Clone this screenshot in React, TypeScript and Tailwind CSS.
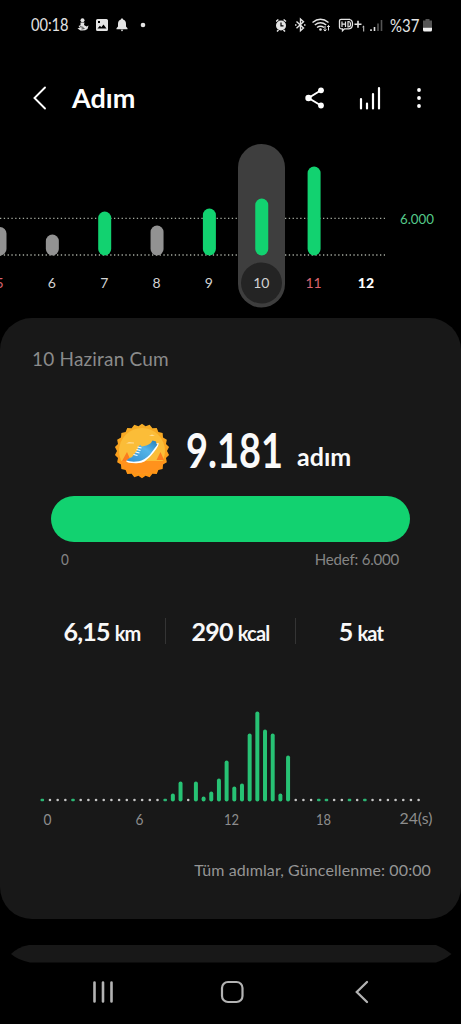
import React from "react";

interface Day {
  label: string;
  top: number;
  met?: boolean;
}

const days: Day[] = [
  { label: "5", top: 92 },
  { label: "6", top: 99.5 },
  { label: "7", top: 76.5, met: true },
  { label: "8", top: 90.5 },
  { label: "9", top: 73.5, met: true },
  { label: "10", top: 63.5, met: true },
  { label: "11", top: 31.5, met: true },
  { label: "12", top: 0 },
];

// bar heights per half hour, 1 = only a green dot on the axis
const slots: Record<number, number> = {
  0: 1, 4: 1, 16: 1, 17: 8, 18: 20, 20: 20, 21: 5, 22: 10, 23: 23, 24: 41,
  25: 15, 26: 18, 27: 68, 28: 90, 29: 72, 30: 68, 31: 8, 32: 46,
  36: 1, 37: 1, 40: 1, 42: 1,
};

const dayColor = (label: string): string => {
  if (label === "5" || label === "11") return "#d8636f";
  if (label === "12") return "#ffffff";
  return "#d2d2d2";
};

const StatusBar = () => (
  <div className="flex h-[50px] items-center justify-between pl-[31px] pr-[29px] text-[17px] text-[#e4e4e4]">
    <div className="flex items-center">
      <span className="w-[46px] origin-left scale-x-[.86] whitespace-nowrap">00:18</span>
      <svg width="70" height="14" viewBox="0 0 70 14" fill="#e4e4e4">
        <circle cx="5.5" cy="2.3" r="2" />
        <path d="M3.5 4.5h4l-.5 2.5 2.5 1.5 2-1-1 3.5Q8 13 3.5 12.5L.5 10.5 3 9.5 1.5 8l2-.8z" />
        <path d="M3 8.700l3.500.7M4.500 11l3-.5" stroke="#000" strokeWidth=".7" />
        <path
          fillRule="evenodd"
          d="M20.500 1h9q1.500 0 1.500 1.500v9q0 1.500-1.500 1.500h-9q-1.500 0-1.500-1.500v-9q0-1.500 1.500-1.500zM20.500 10.500h9l-3-4-2.200 2.800-1.400-1.500zM21 3v2h2v-2z"
        />
        <path d="M45 .5c-1 0-1.300.6-1.300 1.300-2 .6-2.700 2-2.700 4.200v2.500l-1.500 1.800v.9h11v-.9L49 8.500V6c0-2.200-.7-3.600-2.700-4.200C46.300 1.100 46 .5 45 .5zM43.700 11.800h2.600l-1.300 1.700z" />
        <circle cx="66" cy="7" r="2.300" />
      </svg>
    </div>
    <div className="flex items-center">
      <svg className="mr-px" width="113" height="16" viewBox="1 0 113 16" fill="none" stroke="#e4e4e4">
        {/* alarm */}
        <circle cx="6" cy="8.500" r="5" fill="#e4e4e4" stroke="none" />
        <path d="M1 4.500l2.400-2M11 4.500l-2.400-2M2 14.500L3.500 13M10 14.500L8.500 13" strokeWidth="1.500" />
        <path d="M6 5.500v3.300h2.500" stroke="#000" strokeWidth="1.200" />
        {/* bluetooth */}
        <path d="M21.500 4.500l7 6.500-3 2.700V2l3 2.700-7 6.500" strokeWidth="1.400" />
        <path d="M20 8h1.500M29 8h1.500" strokeWidth="1.500" />
        {/* wifi */}
        <path d="M37.500 5.500q8-6.500 16 0M39.800 8q5.700-4.500 11.400 0M42 10.500q3.500-2.600 7 0" strokeWidth="1.500" />
        <circle cx="45.500" cy="12.500" r="1.300" fill="#e4e4e4" stroke="none" />
        <path d="M50 9v5M48.500 12.500l1.500 1.600 1.500-1.600M53.500 13.500V8.500M52.200 10l1.300-1.500L54.800 10" />
        {/* hd voice */}
        <path d="M75 2.300H66q-1.500 0-1.500 1.500v6.500q0 1.500 1.500 1.500h1.500v2l2-2H74q3.500 0 3.500-4.700T74 2.300" strokeWidth="1.300" />
        <path d="M67 4.500v5.500M70.500 4.500v5.500M67 7.200h3.500M73 4.500v5.500h.5q2 0 2-2.700t-2-2.800z" strokeWidth="1.200" />
        <path d="M79.500 7.200h7M83 3.700v7" strokeWidth="1.600" />
        <path d="M87.500 10l1.200-1v5.500" strokeWidth=".9" />
        <path d="M96 14v-1.800M99.500 14v-4" strokeWidth="1.600" />
        <path d="M103 14V6.500M106.500 14V3" stroke="#555" strokeWidth="1.600" />
      </svg>
      <span className="w-[33px] origin-left scale-x-[.83] whitespace-nowrap text-[18px]">%37</span>
      <svg width="9" height="14" viewBox="0 0 9 14">
        <path d="M2.500 1h4v1.500H9V9H0V2.500h2.500z" fill="#555" />
        <path d="M0 9.500h9v2.500q0 1.500-1.500 1.500h-6Q0 13.500 0 12z" fill="#f0f0f0" />
      </svg>
    </div>
  </div>
);

const Header = () => (
  <div className="flex h-[85px] items-center pl-[33px] pr-[40px] pt-[11px] text-white">
    <svg width="14" height="24" viewBox="0 0 14 24" fill="none" stroke="currentColor" strokeWidth="1.900" strokeLinecap="round">
      <path d="M12 1.500L1.500 12 12 22.500" />
    </svg>
    <h1 className="ml-[25px] text-[27px] font-bold">Adım</h1>
    <div className="ml-auto flex items-center">
      <svg width="20" height="22" viewBox="0 0 20 22" fill="currentColor">
        <path d="M16 3.300L3.500 11 16 18.500" fill="none" stroke="currentColor" strokeWidth="1.900" />
        <circle cx="16" cy="3.300" r="2.900" />
        <circle cx="3.500" cy="11" r="3.200" />
        <circle cx="16" cy="18.500" r="2.900" />
      </svg>
      <svg className="ml-[33px]" width="24" height="24" viewBox="0 0 24 24" fill="none" stroke="currentColor" strokeWidth="2.200" strokeLinecap="round">
        <path d="M3 22.500V13M9 22.500V17.500M15 22.500V8M21 22.500V2" />
      </svg>
      <svg className="ml-[35px]" width="4" height="22" viewBox="0 0 4 22" fill="currentColor">
        <circle cx="2" cy="3" r="1.900" />
        <circle cx="2" cy="11" r="1.900" />
        <circle cx="2" cy="19" r="1.900" />
      </svg>
    </div>
  </div>
);

const WeekChart = () => (
  <svg className="block" width="461" height="183" viewBox="0 0 461 183" fontSize="14" textAnchor="middle">
    <path d="M0 83.300H385M0 120H385" stroke="#a5aaa0" strokeWidth="1.300" strokeDasharray="1.300 2.500" />
    <rect x="238" y="9" width="47" height="163.500" rx="23.500" fill="#3e3e3e" />
    <circle cx="261.500" cy="148" r="20.500" fill="#242424" />
    {days.map((day, i) => {
      const x = 52.35 * i;
      return (
        <g key={day.label}>
          {day.top ? (
            <rect x={x - 6.5} y={day.top} width="13" height={120.5 - day.top} rx="6.500" fill={day.met ? "#12d270" : "#929292"} />
          ) : null}
          <text x={x - 0.5} y="153" fill={dayColor(day.label)} fontWeight={day.label === "12" ? 900 : 400}>
            {day.label}
          </text>
        </g>
      );
    })}
    <text x="417" y="89" fill="#55c98a" textLength="34" lengthAdjust="spacingAndGlyphs">
      6.000
    </text>
  </svg>
);

const Badge = () => {
  const points = Array.from({ length: 44 }, (_, i) => {
    const r = i % 2 ? 25 : 27.3;
    const a = (Math.PI * i) / 22;
    return `${28 + r * Math.sin(a)},${28 - r * Math.cos(a)}`;
  }).join(" ");

  return (
    <svg width="56" height="56" viewBox="0 0 56 56">
      <defs>
        <linearGradient id="sky" x1="0" y1="0" x2="0" y2="1">
          <stop offset="0" stopColor="#f5ae27" />
          <stop offset="1" stopColor="#ff9414" />
        </linearGradient>
        <linearGradient id="shoe" x1="0" y1="1" x2="1" y2="0">
          <stop offset="0" stopColor="#348fce" />
          <stop offset=".6" stopColor="#55b4e8" />
          <stop offset="1" stopColor="#237eb9" />
        </linearGradient>
      </defs>
      <polygon points={points} fill="url(#sky)" />
      <circle cx="28" cy="28" r="23" fill="#fbbd38" />
      <path d="M5.500 38h45Q45 51 28 51T5.500 38z" fill="#ff921c" />
      <path d="M8 38l5-9 4 9zM42.500 37l4-8 3.500 8z" fill="#fb7d1e" />
      <path d="M12 20.500l3-1.500 5 .5v1zM35 13l3-1.500 3 1.500z" fill="#ffdc92" />
      <path d="M12 38L40.500 21l4-1Q45.500 22 40 29q-4 5.500-9.500 9.500-3 2-9 1.800Q13 40.200 12 38z" fill="#fff" />
      <path d="M12.500 37.500q2-2.500 5.500-3.500l5.500-7q1-4.800 3-5 .5 2 2.500 1.200 7.500-1.200 9.500-5.700l3.500 1q0 2.500 1.500 3L36 31.500q-6 6-11 6.800-8 1-12.500-.8z" fill="url(#shoe)" />
      <path d="M22.500 26.500l4 1M21.500 29l4 1M23.500 24l4 1M19.500 31.500l4 1" stroke="#fff" strokeWidth="1.200" />
    </svg>
  );
};

const HourChart = () => (
  <svg className="block" width="461" height="125" viewBox="0 706 461 125" fontSize="14.500" fill="#8d8d8d">
    {Array.from({ length: 50 }, (_, i) => {
      const x = 42.3 + i * 7.68;
      const h = slots[i];
      if (!h) return <circle key={i} cx={x} cy="800" r="1.300" fill="#c6c6c6" />;
      if (h === 1) return <rect key={i} x={x - 1.8} y="798.700" width="3.600" height="2.500" rx="1" fill="#2bb674" />;
      return <rect key={i} x={x - 2} y={801.5 - h} width="4" height={h} rx="2" fill="#27c274" />;
    })}
    <text x="43.500" y="825" textLength="8" lengthAdjust="spacingAndGlyphs">0</text>
    <text x="135.500" y="825" textLength="8" lengthAdjust="spacingAndGlyphs">6</text>
    <text x="224" y="825" textLength="15" lengthAdjust="spacingAndGlyphs">12</text>
    <text x="316" y="825" textLength="15" lengthAdjust="spacingAndGlyphs">18</text>
    <text x="399.500" y="824" textLength="33" lengthAdjust="spacingAndGlyphs">24(s)</text>
  </svg>
);

const Stat = ({ value, unit }: { value: string; unit: string }) => (
  <div className="flex h-[26px] items-baseline justify-center gap-[5px] whitespace-nowrap font-bold leading-[26px] text-[#f8f8f8]">
    <span className="text-[25px] tracking-[-0.8px]">{value}</span>
    <span className="text-[20px] tracking-[-0.8px]">{unit}</span>
  </div>
);

const App = () => {
  return (
    <div className="flex h-[1024px] w-[461px] flex-col overflow-hidden bg-black font-['Lato','Noto_Sans',sans-serif]">
      <StatusBar />
      <Header />
      <WeekChart />
      <section className="h-[601px] shrink-0 rounded-[32px] bg-[#181818]">
        <p className="pl-8 pt-[27px] text-[19px] leading-[28px] tracking-[0.2px] text-[#8b8b8b]">10 Haziran Cum</p>
        <div className="mt-[50px] flex h-[56px] items-center pl-[114px] text-[#fafafa]">
          <Badge />
          <span className="mb-[3px] ml-[16px] w-[111px] origin-left scale-x-[.79] whitespace-nowrap text-[48px] font-bold leading-[56px]">
            9.181
          </span>
          <span className="mt-[12px] text-[25px] font-bold">adım</span>
        </div>
        <div className="ml-[51px] mt-[17px] h-[46px] w-[359px] rounded-full bg-[#12d270]" />
        <div className="mt-[6px] flex justify-between pl-[61px] pr-[62px] text-[15px] leading-[22px] text-[#858585]">
          <span className="origin-left scale-x-90">0</span>
          <span className="tracking-[-0.2px]">Hedef: 6.000</span>
        </div>
        <div className="mt-[48px] grid h-[26px] grid-cols-[126px_131px_130px] items-center pl-[39px]">
          <Stat value="6,15" unit="km" />
          <div className="border-x border-[#343434]">
            <Stat value="290" unit="kcal" />
          </div>
          <Stat value="5" unit="kat" />
        </div>
        <div className="mt-[62px]">
          <HourChart />
        </div>
        <p className="mt-[27px] pr-[30px] text-right text-[16px] leading-[24px] tracking-[0.1px] text-[#959595]">
          Tüm adımlar, Güncellenme: 00:00
        </p>
      </section>
      <svg className="mt-[26px] block shrink-0" width="461" height="18" viewBox="0 0 461 18">
        <path d="M11 9Q18 2 29 0H436Q444 3 451.500 9 444 15 436 17.500H30Q18 15 11 9z" fill="#181818" />
      </svg>
      <nav className="flex h-[58px] items-center justify-between pl-[92px] pr-[92px]">
        <svg width="22" height="22" viewBox="0 0 22 22" stroke="#b3b3b3" strokeWidth="2.600" strokeLinecap="round">
          <path d="M2.500 1.500v19M11 1.500v19M19.500 1.500v19" />
        </svg>
        <svg className="mr-[6px]" width="24" height="24" viewBox="0 0 24 24" fill="none" stroke="#b3b3b3" strokeWidth="2.200">
          <rect x="2" y="2" width="20.500" height="20" rx="6" />
        </svg>
        <svg width="14" height="24" viewBox="0 0 14 24" fill="none" stroke="#b3b3b3" strokeWidth="2.300" strokeLinecap="round">
          <path d="M12 2L1.800 12 12 22" />
        </svg>
      </nav>
    </div>
  );
};

export default App;
